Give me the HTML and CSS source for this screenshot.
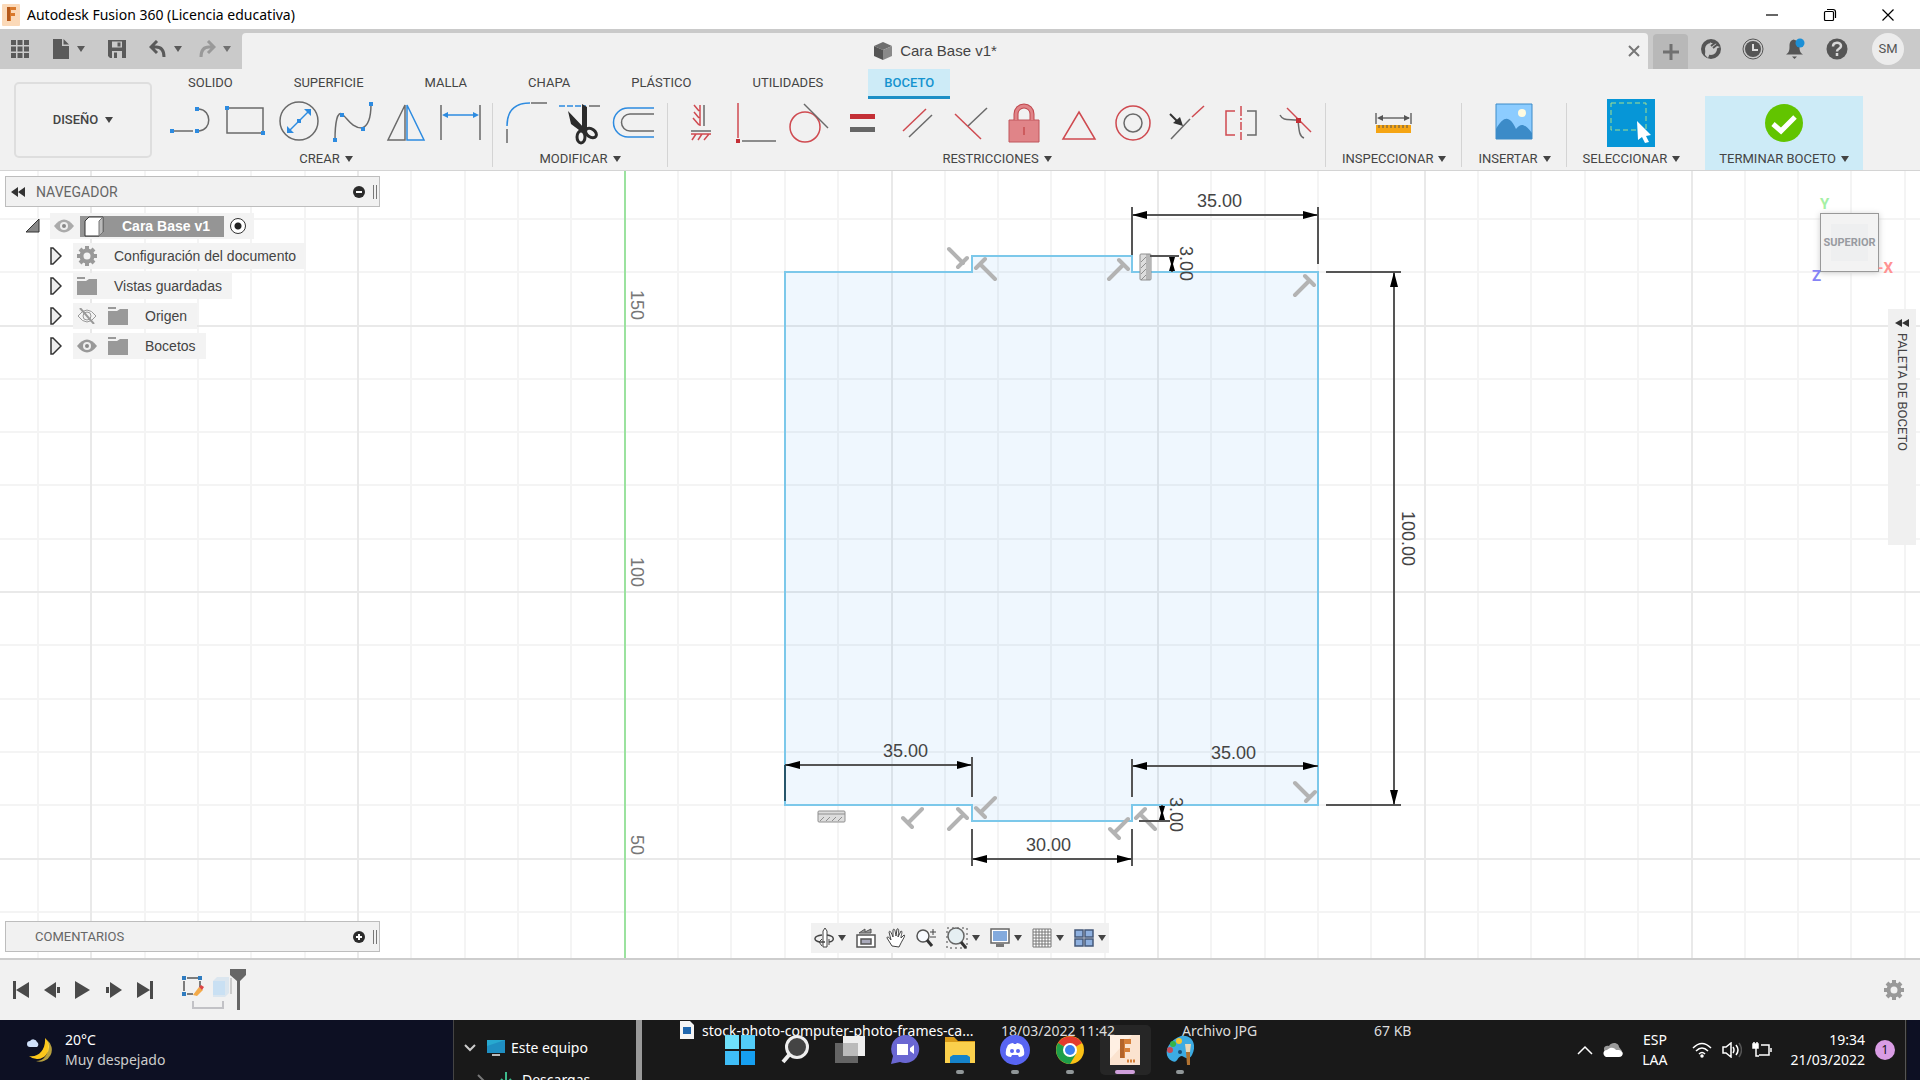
FILE: index.html
```html
<!DOCTYPE html>
<html lang="es">
<head>
<meta charset="utf-8">
<meta name="viewport" content="width=device-width, initial-scale=1">
<title>Autodesk Fusion 360 (Licencia educativa)</title>
<link rel="stylesheet" href="styles.css">
</head>
<body>
<header class="titlebar">
  <svg class="logo" width="18" height="22" viewBox="0 0 18 22"><rect width="18" height="22" rx="1" fill="#fbd9b8"/><path d="M5 3h9v3H9v3h4v3H9v5H5z" fill="#d9792b"/><path d="M5 3h3v14H5z" fill="#b5581a"/></svg>
  <h1 class="app-name">Autodesk Fusion 360 (Licencia educativa)</h1>
  <div class="window-controls">
    <button aria-label="Minimizar"><svg width="14" height="14" viewBox="0 0 14 14"><path d="M1 7h12" stroke="#000" stroke-width="1.2"/></svg></button>
    <button aria-label="Restaurar"><svg width="14" height="14" viewBox="0 0 14 14" fill="none" stroke="#000" stroke-width="1.2"><rect x="1.500" y="3.500" width="9" height="9" rx="1"/><path d="M4 1.500h6a2.500 2.500 0 0 1 2.500 2.500v6"/></svg></button>
    <button aria-label="Cerrar"><svg width="14" height="14" viewBox="0 0 14 14"><path d="M1.500 1.500l11 11M12.500 1.500l-11 11" stroke="#000" stroke-width="1.200"/></svg></button>
  </div>
</header>

<div class="quickbar">
  <div class="quick-tools">
    <button aria-label="Panel de datos"><svg width="18" height="18" viewBox="0 0 18 18" fill="#5a5a5a"><path d="M0 0h5v5H0zM6.500 0h5v5h-5zM13 0h5v5h-5zM0 6.500h5v5H0zM6.500 6.500h5v5h-5zM13 6.500h5v5h-5zM0 13h5v5H0zM6.500 13h5v5h-5zM13 13h5v5h-5z"/></svg></button>
    <button aria-label="Archivo"><svg width="18" height="20" viewBox="0 0 18 20" fill="#5a5a5a"><path d="M1 0h9v7h7v13H1z"/><path d="M11.500 0L17 5.500h-5.500z"/></svg><i class="caret"></i></button>
    <button aria-label="Guardar"><svg width="18" height="18" viewBox="0 0 18 18"><path d="M0 0h18v18H2l-2-2z" fill="#5a5a5a"/><path d="M4 1.500h10v6H4zM4 11h10v7H4z" fill="#cacaca"/><path d="M9.500 2.500h3v4h-3zM6 12.500h3V18H6z" fill="#5a5a5a"/></svg></button>
    <button aria-label="Deshacer"><svg width="18" height="18" viewBox="0 0 18 18"><path d="M8 1L2 7l6 6M2 7h5c5 0 8 3 8 10" fill="none" stroke="#5a5a5a" stroke-width="3"/></svg><i class="caret"></i></button>
    <button class="dim" aria-label="Rehacer"><svg width="18" height="18" viewBox="0 0 18 18"><path d="M10 1l6 6-6 6M16 7h-5c-5 0-8 3-8 10" fill="none" stroke="#8d8d8d" stroke-width="3"/></svg><i class="caret"></i></button>
  </div>
  <div class="doc-tab">
    <span class="doc-name"><svg width="20" height="20" viewBox="0 0 20 20"><path d="M1 5l9-4 9 4-9 4z" fill="#6e6e6e"/><path d="M1 5l9 4v10l-9-4z" fill="#555"/><path d="M19 5l-9 4v10l9-4z" fill="#8a8a8a"/></svg>Cara Base v1*</span>
    <button class="tab-close" aria-label="Cerrar pestaña"><svg width="12" height="12" viewBox="0 0 12 12"><path d="M1 1l10 10M11 1L1 11" stroke="#777" stroke-width="2"/></svg></button>
  </div>
  <button class="tab-add" aria-label="Nuevo diseño"><svg width="18" height="18" viewBox="0 0 18 18"><path d="M9 1v16M1 9h16" stroke="#707070" stroke-width="3"/></svg></button>
  <div class="account">
    <button aria-label="Extensiones"><svg width="20" height="20" viewBox="0 0 20 20"><circle cx="10" cy="10" r="8" fill="none" stroke="#555" stroke-width="4"/><path d="M4 16c0-6 2-9 6-10l-1-3 4 3 2-2 1 3 3 1-4 2c-1 3-4 4-6 4l-2 5z" fill="#cacaca"/><path d="M10 7l5-4M12 9l5-4" stroke="#555" stroke-width="2"/></svg></button>
    <button aria-label="Estado del trabajo"><svg width="22" height="22" viewBox="0 0 22 22"><circle cx="11" cy="11" r="10" fill="none" stroke="#555"/><circle cx="11" cy="11" r="8" fill="#555"/><path d="M11 6v6h5" stroke="#ddd" stroke-width="2" fill="none"/></svg></button>
    <button aria-label="Notificaciones"><svg width="20" height="22" viewBox="0 0 20 22"><path d="M8.500 1.500c-3 1-4 3-4 7 0 4-.500 6-3.500 8h17c-3-2-3.500-4-3.500-8s-2-6-6-7z" fill="#555"/><path d="M7 18.500h5l-2.500 2.500z" fill="#555"/><circle cx="15" cy="5" r="4.500" fill="#1b8fd6"/></svg></button>
    <button aria-label="Ayuda"><svg width="22" height="22" viewBox="0 0 22 22"><circle cx="11" cy="11" r="10.500" fill="#555"/><path d="M7 8.500c0-5 8-5 8-.500 0 3-4 2.500-4 5.500M11 15v3" stroke="#d8d8d8" stroke-width="2.500" fill="none"/></svg></button>
    <button class="avatar">SM</button>
  </div>
</div>

<section class="ribbon">
  <button class="workspace">DISEÑO <i class="caret"></i></button>
  <div class="ribbon-main">
    <nav class="tabs">
      <button>SOLIDO</button><button>SUPERFICIE</button><button>MALLA</button><button>CHAPA</button><button>PLÁSTICO</button><button>UTILIDADES</button><button class="active">BOCETO</button>
    </nav>
    <div class="groups">
      <div class="group">
        <div class="tools">
          <button aria-label="Línea"><svg viewBox="0 0 48 48"><path d="M6 32h20M32 32c13-1 13-21 0-22" class="g"/><path d="M3 30h4v4H3zM28 30h4v4h-4zM28 8h4v4h-4z" class="bf"/></svg></button>
          <button aria-label="Rectángulo"><svg viewBox="0 0 48 48"><path d="M6 9h36v25H6z" class="g"/><path d="M4 7h4v4H4zM40 32h4v4h-4z" class="bf"/></svg></button>
          <button aria-label="Círculo"><svg viewBox="0 0 48 48"><circle cx="24" cy="22" r="19" class="g"/><path d="M14 32l20-20" class="b"/><path d="M22 20h4v4h-4zM36 10v7l-7-7zM12 34v-7l7 7z" class="bf"/></svg></button>
          <button aria-label="Spline"><svg viewBox="0 0 48 48"><path d="M6 41C6 25 8 10 14 16c5 4 9 13 19 13 6-2 9-10 9-24" class="g"/><path d="M4 39h4v4H4zM11 14h4v4h-4zM32 28h4v4h-4zM40 3h4v4h-4z" class="bf"/></svg></button>
          <button aria-label="Simetría"><svg viewBox="0 0 48 48"><path d="M22 6v35H5z" class="g"/><path d="M24 6v35h17z" class="b"/></svg></button>
          <button aria-label="Cota"><svg viewBox="0 0 48 48"><path d="M4 6v35M43 6v35" class="g"/><path d="M7 16h33" class="b"/><path d="M5 16l6-3v6zM42 16l-6-3v6z" class="bf"/></svg></button>
        </div>
        <button class="group-name">CREAR<i class="caret"></i></button>
      </div>
      <div class="group modify">
        <div class="tools">
          <button aria-label="Empalme"><svg viewBox="0 0 48 48"><path d="M5 27C5 11 14 4 28 4" class="b"/><path d="M5 30v14M29 4h16" class="g"/></svg></button>
          <button aria-label="Recortar"><svg viewBox="0 0 48 48"><path d="M3 7h27" class="b" stroke-dasharray="6 2" stroke-width="2"/><path d="M33 7h11" class="g"/><path d="M26 5l5 3v22l-3 4-2-3zM12 12l18 19-3 3-12-9z" fill="#2b2b2b"/><g fill="none" stroke="#2b2b2b" stroke-width="3"><ellipse cx="25" cy="38" rx="4" ry="6"/><ellipse cx="35" cy="34" rx="6" ry="4" transform="rotate(35 35 34)"/></g></svg></button>
          <button aria-label="Desfase"><svg viewBox="0 0 48 48"><path d="M44 9H18a14 14 0 0 0 0 29h26" class="b" stroke-width="2"/><path d="M44 15H20a8 8 0 0 0 0 17h24" class="g" stroke-width="2"/></svg></button>
        </div>
        <button class="group-name">MODIFICAR<i class="caret"></i></button>
      </div>
      <div class="group">
        <div class="tools">
          <button aria-label="Horizontal/Vertical"><svg viewBox="0 0 48 48"><path d="M24 6v21M23 12l-5-6M23 19l-5-6M23 26l-6-7M15 35h20M20 35l-4 6M26 35l-4 6M33 35l-5 6" class="r" stroke-width="2"/><path d="M28 6v21M15 32h20" class="g"/></svg></button>
          <button aria-label="Coincidente"><svg viewBox="0 0 48 48"><path d="M8 4v35" class="r"/><path d="M12 42h34" class="g"/><path d="M6 40h4v4H6z" fill="#c42f36"/></svg></button>
          <button aria-label="Tangente"><svg viewBox="0 0 48 48"><circle cx="21" cy="28" r="15" class="r"/><path d="M20 5l24 24" class="g"/></svg></button>
          <button aria-label="Igual"><svg viewBox="0 0 48 48"><path d="M12 15h25v5H12z" fill="#c42f36"/><path d="M12 28h25v5H12z" fill="#666"/></svg></button>
          <button aria-label="Paralela"><svg viewBox="0 0 48 48"><path d="M11 32l23-22" class="r"/><path d="M17 38l23-22" class="g"/></svg></button>
          <button aria-label="Perpendicular"><svg viewBox="0 0 48 48"><path d="M9 15l26 25" class="r"/><path d="M22 27l19-18" class="g"/></svg></button>
          <button aria-label="Bloquear"><svg viewBox="0 0 48 48"><path d="M9 21h30v22H9z" fill="#e08488" stroke="#c0575c"/><path d="M16 21v-6a8 8 0 0 1 16 0v6" fill="none" stroke="#c0484e" stroke-width="5"/><path d="M16 21v-6a8 8 0 0 1 16 0v6" fill="none" stroke="#e08488" stroke-width="3"/><path d="M24 28v8" stroke="#b33"/></svg></button>
          <button aria-label="Punto medio"><svg viewBox="0 0 48 48"><path d="M25 13l16 27H9z" class="r" stroke-width="2"/></svg></button>
          <button aria-label="Concéntrica"><svg viewBox="0 0 48 48"><circle cx="25" cy="24" r="17" class="r" stroke-width="2"/><circle cx="25" cy="24" r="9" class="g" stroke-width="2"/></svg></button>
          <button aria-label="Colineal"><svg viewBox="0 0 48 48"><path d="M9 40l19-20" class="g"/><path d="M30 18l12-11" class="r"/><path d="M8 15l7 7" stroke="#333" stroke-width="2"/><path d="M21 27l-10-3 7-6z" fill="#333"/></svg></button>
          <button aria-label="Simétrica"><svg viewBox="0 0 48 48"><path d="M19 12h-9v24h9M25 7v10M25 19v2M25 23v8M25 33v8" class="r"/><path d="M31 12h9v24h-9" class="g"/></svg></button>
          <button aria-label="Curvatura"><svg viewBox="0 0 48 48"><path d="M17 9l24 24" class="r"/><path d="M10 16c3 6 8 4 18 5 1 10 1 16 6 18" class="g"/><path d="M26 19h5v5h-5z" fill="#c42f36"/></svg></button>
        </div>
        <button class="group-name">RESTRICCIONES<i class="caret"></i></button>
      </div>
      <div class="group wide">
        <div class="tools"><button aria-label="Medir"><svg viewBox="0 0 48 48"><path d="M6 14v11M41 14v11M9 19h30" class="g" stroke-width="2"/><path d="M7 19l6-3v6zM40 19l-6-3v6z" fill="#555"/><path d="M6 26h35v8H6z" fill="#f5a514"/><path d="M9 26v3M13 26v3M17 26v3M21 26v3M25 26v3M29 26v3M33 26v3M37 26v3" stroke="#555"/></svg></button></div>
        <button class="group-name">INSPECCIONAR<i class="caret"></i></button>
      </div>
      <div class="group wide">
        <div class="tools"><button aria-label="Insertar imagen"><svg viewBox="0 0 48 48"><path d="M6 5h36v35H6z" fill="#8cccff"/><path d="M6 30c8-14 14-13 20 0 5-6 8-6 16 4v6H6z" fill="#3c8bc8"/><circle cx="32" cy="14" r="4" fill="#fffbe0"/><path d="M6 5h36v35H6z" fill="none" stroke="#3c8bc8"/></svg></button></div>
        <button class="group-name">INSERTAR<i class="caret"></i></button>
      </div>
      <div class="group wide last">
        <div class="tools"><button aria-label="Seleccionar"><svg viewBox="0 0 48 48"><path d="M0 0h48v48H0z" fill="#0696d7"/><path d="M4 4h35v27H4z" fill="none" stroke="#a6e08c" stroke-dasharray="5 3"/><path d="M30 22l14 14-5 1 3 6-4 1-3-6-4 3z" fill="#fff"/></svg></button></div>
        <button class="group-name">SELECCIONAR<i class="caret"></i></button>
      </div>
      <div class="group finish">
        <div class="tools"><button aria-label="Terminar"><svg viewBox="0 0 48 48"><circle cx="24" cy="24" r="19" fill="#62c400"/><path d="M13 25l8 7 14-14" fill="none" stroke="#fff" stroke-width="5"/></svg></button></div>
        <button class="group-name">TERMINAR BOCETO<i class="caret"></i></button>
      </div>
    </div>
  </div>
</section>

<main class="canvas">
  <svg class="sketch" aria-label="Boceto">
    <g transform="translate(0 -171)">
      <path class="grid" d="M38 171v787M145 171v787M198 171v787M251 171v787M305 171v787M411 171v787M465 171v787M518 171v787M571 171v787M678 171v787M731 171v787M785 171v787M838 171v787M945 171v787M998 171v787M1051 171v787M1105 171v787M1211 171v787M1265 171v787M1318 171v787M1371 171v787M1478 171v787M1531 171v787M1585 171v787M1638 171v787M1745 171v787M1798 171v787M1851 171v787M1905 171v787M0 219h4000M0 272h4000M0 379h4000M0 432h4000M0 485h4000M0 539h4000M0 645h4000M0 699h4000M0 752h4000M0 805h4000M0 912h4000"/>
      <path class="grid major" d="M91 171v787M358 171v787M892 171v787M1158 171v787M1425 171v787M1692 171v787M0 326h4000M0 592h4000M0 859h4000"/>
      <path d="M625 171v787" stroke="#9be29f" stroke-width="2"/>
      <g class="axis"><text transform="translate(631 290) rotate(90)">150</text><text transform="translate(631 557) rotate(90)">100</text><text transform="translate(631 835) rotate(90)">50</text></g>
      <path class="profile" d="M785 272h187v-16h160v16h186v533h-186v16H972v-16H785z"/>
      <g class="rel">
        <path d="M949 249l14 14M967 258l-9 9M995 279l-15-15M985 259l-9 9M1109 279l14-14M1119 260l9 9M1295 295l14-14M1305 276l9 9M922 809l-14 14M903 818l9 9M949 829l14-14M958 809l9 9M995 798l-14 14M976 808l9 9M1128 819l-14 14M1110 829l9 9M1155 829l-14-14M1145 809l-9 9M1295 783l14 14M1315 792l-9 9"/>
      </g>
      <g fill="#ddd" stroke="#8f8f8f"><rect x="1140" y="254" width="11" height="26" rx="1"/><path d="M1147 254v26M1149 254v26M1141 262l5-5M1141 268l5-5M1141 274l5-5M1141 280l5-5"/><rect x="818" y="811" width="27" height="11" rx="1"/><path d="M818 814h27M820 821l4-4M826 821l4-4M832 821l4-4M838 821l4-4"/></g>
      <g class="dim-line">
        <path d="M1132 215h186M1132 207v48M1318 207v57M1326 272h75M1326 805h75M1394 272v533M785 765h187M972 757v40M1132 766h186M1132 759v38M972 859h160M972 829v37M1132 829v37M1150 256h29M1172 256v16M1139 821h31M1162 805v16"/>
        <path d="M785 765v36" stroke="#27566b"/>
        <path class="arrows" d="M1132 215l15-4v8zM1318 215l-15-4v8zM1394 272l-4 15h8zM1394 805l-4-15h8zM785 765l15-4v8zM972 765l-15-4v8zM1132 766l15-4v8zM1318 766l-15-4v8zM972 859l15-4v8zM1132 859l-15-4v8zM1169 257h6l-2 7 2 7h-6l2-7zM1159 806h6l-2 7 2 7h-6l2-7z"/>
      </g>
      <g class="dim-text">
        <text x="1197" y="207">35.00</text><text x="883" y="757">35.00</text><text x="1211" y="759">35.00</text><text x="1026" y="851">30.00</text>
        <text transform="translate(1402 511) rotate(90)">100.00</text><text transform="translate(1180 246) rotate(90)">3.00</text><text transform="translate(1170 797) rotate(90)">3.00</text>
      </g>
    </g>
  </svg>

  <aside class="browser">
    <div class="panel-head">
      <svg class="rewind" width="14" height="10" viewBox="0 0 14 10"><path d="M7 0v10L0 5zM14 0v10L7 5z" fill="#333"/></svg>
      <span class="nav-title">NAVEGADOR</span>
      <button aria-label="Contraer"><svg width="12" height="12" viewBox="0 0 12 12"><circle cx="6" cy="6" r="6" fill="#2b2b2b"/><path d="M3 6h6" stroke="#fff" stroke-width="2"/></svg></button><i class="grip"></i>
    </div>
    <ul class="tree">
      <li class="root"><svg width="16" height="16" viewBox="0 0 16 16"><path d="M14 1v13H1z" fill="#888" stroke="#333"/></svg>
        <span class="item"><svg width="20" height="14" viewBox="0 0 20 14"><path d="M0 7Q10-6 20 7 10 20 0 7z" fill="#aaa"/><circle cx="10" cy="7" r="4" fill="#eee"/><circle cx="10" cy="7" r="2" fill="#888"/></svg>
        <span class="selected"><svg width="24" height="21" viewBox="0 0 24 21"><path d="M3 5l4-4h14v15l-4 4H3z" fill="#fff" stroke="#333"/><path d="M17 5l4-4v15l-4 4z" fill="#bbb" stroke="#777"/></svg>Cara Base v1</span>
        <input type="radio" checked aria-label="Activar Cara Base v1"></span></li>
      <li><svg class="arrow" width="12" height="18" viewBox="0 0 12 18"><path d="M1 1l2 0 8 8-8 8H1z"/></svg><span class="item"><svg width="20" height="20" viewBox="-10 -10 20 20"><circle r="5.500" fill="none" stroke="#999" stroke-width="4"/><path d="M0-10V-6M0 10V6M-10 0h4M10 0H6M-7-7l3 3M7-7L4-4M-7 7l3-3M7 7L4 4" stroke="#999" stroke-width="4"/></svg><b>Configuración del documento</b></span></li>
      <li><svg class="arrow" width="12" height="18" viewBox="0 0 12 18"><path d="M1 1l2 0 8 8-8 8H1z"/></svg><span class="item"><svg width="20" height="18" viewBox="0 0 20 18"><path d="M0 4h9l3-2h8v16H0zM0 0h8v2H0z" fill="#999"/></svg><b>Vistas guardadas</b></span></li>
      <li><svg class="arrow" width="12" height="18" viewBox="0 0 12 18"><path d="M1 1l2 0 8 8-8 8H1z"/></svg><span class="item"><svg width="20" height="16" viewBox="0 0 20 16"><g fill="none" stroke="#999"><path d="M1 8Q10-4 19 8 10 20 1 8z"/><circle cx="10" cy="8" r="4"/><path d="M3 0l14 16" stroke-width="2"/></g></svg><svg width="20" height="18" viewBox="0 0 20 18"><path d="M0 4h9l3-2h8v16H0zM0 0h8v2H0z" fill="#999"/></svg><b>Origen</b></span></li>
      <li><svg class="arrow" width="12" height="18" viewBox="0 0 12 18"><path d="M1 1l2 0 8 8-8 8H1z"/></svg><span class="item"><svg width="20" height="14" viewBox="0 0 20 14"><path d="M0 7Q10-6 20 7 10 20 0 7z" fill="#999"/><circle cx="10" cy="7" r="4" fill="#eee"/><circle cx="10" cy="7" r="2" fill="#888"/></svg><svg width="20" height="18" viewBox="0 0 20 18"><path d="M0 4h9l3-2h8v16H0zM0 0h8v2H0z" fill="#999"/></svg><b>Bocetos</b></span></li>
    </ul>
  </aside>

  <div class="viewcube"><button>SUPERIOR</button><span class="ax-y">Y</span><span class="ax-x">-X</span><span class="ax-z">Z</span></div>

  <button class="palette"><svg width="14" height="8" viewBox="0 0 14 8"><path d="M7 0v8L0 4zM14 0v8L7 4z" fill="#333"/></svg><span>PALETA DE BOCETO</span></button>

  <div class="panel-head comments">
    <span class="com-title">COMENTARIOS</span>
    <button aria-label="Añadir comentario"><svg width="12" height="12" viewBox="0 0 12 12"><circle cx="6" cy="6" r="6" fill="#2b2b2b"/><path d="M3 6h6M6 3v6" stroke="#fff" stroke-width="2"/></svg></button><i class="grip"></i>
  </div>

  <div class="navbar">
    <button aria-label="Órbita"><svg width="20" height="20" viewBox="0 0 20 20" fill="none" stroke="#444"><path d="M9 3l2-3 2 3v16H9z" fill="#fff"/><path d="M8 7C-1 8-1 13 6 14h5M13 7c8 1 8 6 2 7" stroke-width="1.500"/><path d="M8 11l-3 3 3 4M15 11v6"/></svg><i class="caret"></i></button>
    <button aria-label="Mirar a"><svg width="20" height="20" viewBox="0 0 20 20" fill="#fff" stroke="#555"><path d="M1 7h18v12H1z" stroke-width="1.500"/><path d="M5 11h10v5H5z" fill="#aab" stroke-width="1.500"/><path d="M3 5l6-4v3l6-3v4z" fill="#999"/></svg></button>
    <button aria-label="Encuadre"><svg width="20" height="20" viewBox="0 0 20 20"><path d="M6 18L1 10c0-2 2-1 4 2L3 4c1-2 2 0 4 5V2c1-2 2-1 3 6l1-7c2-1 2 1 1 8l3-6c2 0 0 4 0 7l3-3c2 0-1 4-3 8l-2 4z" fill="#fff" stroke="#444"/></svg></button>
    <button aria-label="Zoom"><svg width="20" height="20" viewBox="0 0 20 20"><circle cx="7" cy="8" r="6" fill="#f8fbff" stroke="#555" stroke-width="1.500"/><path d="M11 12l5 6" stroke="#333" stroke-width="3"/><path d="M14 4h6M17 1v6M14 9h6" stroke="#444"/></svg></button>
    <button aria-label="Ventana de zoom"><svg width="22" height="22" viewBox="0 0 22 22"><path d="M1 1h20v20H1z" fill="none" stroke="#444" stroke-dasharray="2 3"/><circle cx="10" cy="9" r="8" fill="#e5eff2" stroke="#666" stroke-width="1.500"/><path d="M15 15l5 6" stroke="#333" stroke-width="3"/></svg><i class="caret"></i></button>
    <button aria-label="Visualización"><svg width="20" height="20" viewBox="0 0 20 20"><path d="M1 1h18v14H1z" fill="#fff" stroke="#666" stroke-width="1.500"/><path d="M3 3h14v10H3z" fill="#83aadd"/><path d="M6 16h8v3H6z" fill="#777"/></svg><i class="caret"></i></button>
    <button aria-label="Rejilla"><svg width="20" height="20" viewBox="0 0 20 20"><path d="M1 1h18v18H1zM4 1v18M7 1v18M10 1v18M13 1v18M16 1v18M1 4h18M1 7h18M1 10h18M1 13h18M1 16h18" fill="#fff" stroke="#777"/></svg><i class="caret"></i></button>
    <button aria-label="Ventanas gráficas"><svg width="20" height="18" viewBox="0 0 20 18"><path d="M1 1h8v7H1zM11 1h8v7h-8zM1 10h8v7H1zM11 10h8v7h-8z" fill="#8eb0df" stroke="#445879" stroke-width="1.500"/></svg><i class="caret"></i></button>
  </div>
</main>

<section class="timeline">
  <div class="playback">
    <button aria-label="Inicio"><svg width="16" height="18" viewBox="0 0 16 18" fill="#4a4a4a"><path d="M0 0h3v18H0zM16 1v16L3 9z"/></svg></button>
    <button aria-label="Anterior"><svg width="16" height="18" viewBox="0 0 16 18" fill="#4a4a4a"><path d="M12 1v16L0 9zM13 6h3v6h-3z"/></svg></button>
    <button aria-label="Reproducir"><svg width="16" height="18" viewBox="0 0 16 18" fill="#4a4a4a"><path d="M0 0v18l15-9z"/></svg></button>
    <button aria-label="Siguiente"><svg width="16" height="18" viewBox="0 0 16 18" fill="#4a4a4a"><path d="M4 1v16l12-8zM0 6h3v6H0z"/></svg></button>
    <button aria-label="Fin"><svg width="16" height="18" viewBox="0 0 16 18" fill="#4a4a4a"><path d="M0 1v16l13-8zM13 0h3v18h-3z"/></svg></button>
  </div>
  <svg class="features" width="66" height="42" viewBox="0 0 66 42"><path d="M6 9h11M3 12v10M19 12v6M6 25h6" stroke="#555" stroke-width="1.500"/><path d="M1 7h4v4H1zM17 7h4v4h-4zM1 23h4v4H1z" fill="#2f7cc0"/><path d="M12 26l6-8 4 3-6 6z" fill="#f3aa49"/><path d="M18 18l2-2 3 2-2 3z" fill="#d44"/><path d="M32 12l4-4h12v16l-4 4H32z" fill="#dbe6ef"/><path d="M32 12h12v14H32z" fill="#c9e0f3"/><path d="M50 9v16" stroke="#ccc" stroke-width="2"/><path d="M12 32v7h30v-7" fill="none" stroke="#c2c2c6" stroke-width="2"/><path d="M49 0h16v6l-6 6v29h-3V12l-7-6z" fill="#666"/></svg>
  <button class="settings" aria-label="Configuración"><svg width="20" height="20" viewBox="-10 -10 20 20"><circle r="5.500" fill="none" stroke="#999" stroke-width="4"/><path d="M0-10V-6M0 10V6M-10 0h4M10 0H6M-7-7l3 3M7-7L4-4M-7 7l3-3M7 7L4 4" stroke="#999" stroke-width="4"/></svg></button>
</section>

<footer class="taskbar">
  <div class="explorer">
    <div class="side">
      <div class="side-row"><svg width="12" height="8" viewBox="0 0 12 8"><path d="M1 1l5 5 5-5" fill="none" stroke="#ccc" stroke-width="2"/></svg><svg width="18" height="16" viewBox="0 0 18 16"><path d="M0 0h18v13H0z" fill="#27a9d0"/><path d="M0 13V6l18-6v13z" fill="#1b7fb9" opacity=".6"/><path d="M5 14h8v2H5z" fill="#bbb"/></svg>Este equipo</div>
      <div class="side-row sub"><svg width="8" height="12" viewBox="0 0 8 12"><path d="M1 1l5 5-5 5" fill="none" stroke="#777" stroke-width="2"/></svg><svg width="14" height="16" viewBox="0 0 14 16"><path d="M7 0v12M2 7l5 5 5-5" fill="none" stroke="#3dba8c" stroke-width="2"/></svg>Descargas</div>
    </div>
    <div class="file-row"><svg width="14" height="18" viewBox="0 0 14 18"><path d="M0 0h10l4 4v14H0z" fill="#f4f4f4"/><path d="M3 6h8v7H3z" fill="#1f66ad"/></svg><span class="f-name">stock-photo-computer-photo-frames-ca...</span><span class="f-date">18/03/2022 11:42</span><span class="f-type">Archivo JPG</span><span class="f-size">67 KB</span></div>
  </div>
  <button class="weather"><svg width="28" height="28" viewBox="0 0 28 28"><path d="M18 2a12 12 0 1 1-16 18c9 2 17-6 16-18z" fill="#fbc71b"/><path d="M20 4a12 12 0 0 1-11 21c10 0 14-10 11-21z" fill="#ffde4a" opacity=".7"/><path d="M3 11a3 3 0 0 1 0-6 4 4 0 0 1 7 1 3 3 0 0 1 0 5z" fill="#cfe0fa"/></svg><span>20°C<small>Muy despejado</small></span></button>
  <nav class="apps">
    <button aria-label="Inicio"><svg width="30" height="30" viewBox="0 0 30 30"><path d="M0 0h14v14H0z" fill="#6fe0fb"/><path d="M16 0h14v14H16z" fill="#52ccf8"/><path d="M0 16h14v14H0z" fill="#3fbdf6"/><path d="M16 16h14v14H16z" fill="#169ff0"/></svg></button>
    <button aria-label="Buscar"><svg width="30" height="30" viewBox="0 0 30 30"><circle cx="17" cy="12" r="10.500" fill="#444" stroke="#eee" stroke-width="3"/><path d="M9 20l-6 7" stroke="#eee" stroke-width="4"/></svg></button>
    <button aria-label="Vista de tareas"><svg width="30" height="30" viewBox="0 0 30 30"><path d="M8 1h22v20H8z" fill="#eee"/><path d="M0 8h23v20H0z" fill="#777" opacity=".8"/><path d="M8 8h15v13H8z" fill="#bbb"/></svg></button>
    <button aria-label="Chat"><svg width="30" height="30" viewBox="0 0 30 30"><path d="M15 0a14 14 0 1 1-5 27l-9 2 2-8A14 14 0 0 1 15 0z" fill="#6a67d2"/><path d="M7 9h11v11H7zM20 13l4-3v9l-4-3z" fill="#fff"/></svg></button>
    <button class="running" aria-label="Explorador"><svg width="30" height="30" viewBox="0 0 30 30"><path d="M0 2h9l4 4h17v8H0z" fill="#d99b18"/><path d="M0 7h30v21H0z" fill="#fbd04c"/><path d="M5 28v-6l3-2h14l3 2v6z" fill="#1583cb"/></svg></button>
    <button class="running" aria-label="Discord"><svg width="30" height="30" viewBox="0 0 30 30"><circle cx="15" cy="15" r="15" fill="#5865f2"/><path d="M8 10q3-2 5-2l1 1h2l1-1q2 0 5 2 3 5 2 10-2 2-5 2l-1-2h-6l-1 2q-3 0-5-2-1-5 2-10z" fill="#fff"/><circle cx="12" cy="16" r="2" fill="#5865f2"/><circle cx="18" cy="16" r="2" fill="#5865f2"/></svg></button>
    <button class="running" aria-label="Chrome"><svg width="28" height="28" viewBox="0 0 28 28"><circle cx="14" cy="14" r="14" fill="#fbc116"/><path d="M14 14L2 7A14 14 0 0 1 26 7z" fill="#e33b2e"/><path d="M14 14L2 7a14 14 0 0 0 12 21l6-10z" fill="#1e9e4a"/><circle cx="14" cy="14" r="7" fill="#fff"/><circle cx="14" cy="14" r="5" fill="#3b80ef"/></svg></button>
    <button class="running current" aria-label="Fusion 360"><svg width="30" height="30" viewBox="0 0 30 30"><path d="M0 0h30v30H0z" fill="#fbe3cf"/><path d="M0 0h22L0 24z" fill="#fff0e3"/><path d="M10 4h11v5h-6v4h5v4h-5v6h-5z" fill="#d68039"/><path d="M10 4h4v19h-4z" fill="#b3642a"/><path d="M17 26h9" stroke="#d68039" stroke-width="3" stroke-dasharray="2 1"/></svg></button>
    <button class="running" aria-label="Paint"><svg width="28" height="30" viewBox="0 0 28 30"><path d="M15 1C27-1 31 11 26 20c-3 6-8 2-10 1-5 0-4 8-10 5C-3 22-1 7 15 1z" fill="#3cabe2"/><circle cx="7" cy="9" r="3" fill="#35b54b"/><circle cx="13" cy="6" r="3" fill="#f4c42e"/><circle cx="4" cy="15" r="3" fill="#c84b55"/><circle cx="14" cy="17" r="2" fill="#174e76"/><path d="M19 9h6l-1 8h-4z" fill="#e9d7b6"/><path d="M20 17h4v13h-3z" fill="#b07231"/></svg></button>
  </nav>
  <div class="tray">
    <svg width="16" height="10" viewBox="0 0 16 10"><path d="M1 9l7-7 7 7" fill="none" stroke="#fff" stroke-width="1.500"/></svg>
    <svg width="20" height="14" viewBox="0 0 20 14"><path d="M2 9c-3-5 1-7 4-6 3-5 10-3 10 1l3 4z" fill="#999"/><path d="M3 14c-4-2-3-7 1-7 4-4 8-2 9 0 9-1 8 7 3 7z" fill="#fff"/></svg>
    <span class="lang">ESP<br>LAA</span>
    <svg width="20" height="16" viewBox="0 0 20 16" fill="none" stroke="#fff" stroke-width="1.500"><path d="M1 6q9-9 18 0M4 9q6-6 12 0M7 12q3-3 6 0"/><circle cx="10" cy="14" r="1" fill="#fff"/></svg>
    <svg width="20" height="16" viewBox="0 0 20 16" fill="none" stroke="#fff" stroke-width="1.500"><path d="M1 5h3l5-4v14l-5-4H1zM11 5q2 3 0 6M14 3q4 5 0 10"/><path d="M17 1q5 7 0 14" stroke="#555"/></svg>
    <svg width="20" height="16" viewBox="0 0 20 16" fill="none" stroke="#fff" stroke-width="1.500"><path d="M9 3h8v10H7M4 6v8h3M19 6v4"/><path d="M1 2h5v4H1zM2 0v2M5 0v2" fill="#fff"/></svg>
    <span class="clock">19:34<br>21/03/2022</span>
    <span class="badge">1</span>
  </div>
</footer>
</body>
</html>
```
FILE: styles.css
```css
* { box-sizing: border-box; }
html, body { margin: 0; height: 100%; }
body {
  display: flex;
  flex-direction: column;
  min-height: 100vh;
  overflow: hidden;
  background: #f1f1f1;
  color: #444;
  font: 13px/16px Roboto, "Liberation Sans", sans-serif;
}
button {
  display: flex;
  align-items: center;
  justify-content: center;
  margin: 0;
  padding: 0;
  border: 0;
  background: none;
  color: inherit;
  font: inherit;
}
svg { display: block; flex: none; }
.caret {
  width: 0;
  height: 0;
  border: 4px solid transparent;
  border-top: 6px solid #444;
  border-bottom: 0;
}

/* Title bar */
.titlebar {
  display: flex;
  align-items: center;
  flex: none;
  height: 29px;
  padding: 0 3px 0 2px;
  background: #fff;
}
.app-name {
  margin: 0 auto 0 7px;
  color: #000;
  font: 14px/20px "Noto Sans", "Open Sans", sans-serif;
}
.window-controls { display: flex; }
.window-controls button { width: 58px; height: 29px; }

/* Quick access bar and document tab */
.quickbar {
  display: flex;
  align-items: flex-end;
  flex: none;
  height: 40px;
  background: #cacaca;
}
.quick-tools {
  display: flex;
  align-items: center;
  gap: 23px;
  width: 242px;
  height: 40px;
  padding-left: 11px;
}
.quick-tools button { gap: 7px; }
.quick-tools .caret { border-top-color: #5a5a5a; }
.quick-tools .dim { opacity: .8; margin-left: -7px; }
.doc-tab {
  display: flex;
  align-items: center;
  flex: 1;
  height: 36px;
  margin-right: 5px;
  padding-right: 8px;
  border-radius: 4px 4px 0 0;
  background: #f1f1f1;
}
.doc-name {
  display: flex;
  align-items: center;
  justify-content: center;
  gap: 7px;
  flex: 1;
  font: 15px/18px "Liberation Sans", sans-serif;
}
.tab-add {
  width: 35px;
  height: 35px;
  border-radius: 4px 4px 0 0;
  background: #b8b8b8;
}
.account {
  display: flex;
  align-items: center;
  gap: 20px;
  height: 40px;
  padding: 0 16px 0 12px;
}
.account button { width: 22px; }
.account .avatar {
  width: 32px;
  height: 32px;
  margin-left: 4px;
  border-radius: 50%;
  background: #ececec;
  color: #555;
}

/* Ribbon */
.ribbon {
  display: flex;
  flex: none;
  height: 102px;
  padding-left: 14px;
  border-bottom: 1px solid #d4d4d4;
}
.workspace {
  gap: 7px;
  width: 138px;
  height: 76px;
  margin-top: 13px;
  border: 2px solid #dedede;
  border-radius: 5px;
  font-weight: 500;
}
.ribbon-main { margin-left: 7px; flex: 1; }
.tabs { display: flex; gap: 29px; padding-left: 13px; }
.tabs button { height: 30px; padding: 0 16px; border-bottom: 3px solid transparent; }
.tabs .active {
  border-color: #1b8fc6;
  background: #cdebf7;
  color: #1593cf;
  font-weight: 500;
}
.groups { display: flex; height: 71px; }
.group {
  display: flex;
  flex-direction: column;
  flex: none;
  align-items: center;
  padding: 0 5px;
  background: linear-gradient(#d4d4d4, #d4d4d4) right 4px / 1px 64px no-repeat;
}
.group.modify { padding: 0 7px 0 6px; }
.group.wide { padding: 0 16px; }
.group.last { background: none; }
.tools { display: flex; }
.tools button { width: 54px; height: 48px; }
.tools svg { width: 48px; height: 48px; }
.group-name { gap: 5px; height: 24px; white-space: nowrap; }
.group.finish {
  height: 74px;
  margin: -3px 0 0 9px;
  padding: 3px 14px 0;
  background: #cdebf7;
}
.g { fill: none; stroke: #6a6a6a; stroke-width: 1.500; }
.b { fill: none; stroke: #2d8be0; stroke-width: 1.500; }
.r { fill: none; stroke: #cf4a50; stroke-width: 1.500; }
.bf { fill: #2d8be0; }

/* Drawing area */
.canvas {
  position: relative;
  flex: 1;
  min-height: 400px;
  overflow: hidden;
  background: #fff;
}
.sketch { position: absolute; inset: 0; width: 100%; height: 100%; }
.grid { fill: none; stroke: #f4f4f4; stroke-width: 2; }
.major { stroke: #e9e9e9; }
.axis { fill: #777; font: 18px "Liberation Sans", sans-serif; }
.profile { fill: rgba(30, 140, 240, .07); stroke: #7cc8ea; stroke-width: 2; }
.rel { fill: none; stroke: #b3b3b3; stroke-width: 4; stroke-linecap: round; }
.dim-line { fill: none; stroke: #555; stroke-width: 2; }
.arrows { fill: #000; stroke: none; }
.dim-text { fill: #444; font: 18px "Liberation Sans", sans-serif; }

.panel-head {
  display: flex;
  align-items: center;
  width: 375px;
  height: 31px;
  padding: 0 2px 0 5px;
  border: 1px solid #bdbdbd;
  background: #f1f1f1;
  color: #666;
}
.rewind { margin-right: 11px; }
.nav-title { flex: 1; font-size: 14px; }
.com-title { flex: 1; padding-left: 24px; }
.grip { width: 4px; height: 14px; margin-left: 8px; border: solid #777; border-width: 0 1px; }
.browser { position: absolute; top: 5px; left: 5px; }
.comments { position: absolute; bottom: 6px; left: 5px; }
.tree {
  display: flex;
  flex-direction: column;
  gap: 4px;
  margin: 6px 0 0;
  padding: 0;
  list-style: none;
  font: 14px/18px "Liberation Sans", sans-serif;
}
.tree li { display: flex; align-items: center; gap: 11px; height: 26px; padding-left: 45px; }
.tree .root { gap: 9px; padding-left: 20px; }
.tree b { padding-left: 6px; font-weight: 400; }
.item {
  display: flex;
  align-items: center;
  gap: 11px;
  height: 26px;
  padding: 0 10px 0 4px;
  background: #f3f3f3;
}
.root .item { gap: 6px; padding-right: 8px; }
.selected {
  display: flex;
  align-items: center;
  gap: 16px;
  height: 21px;
  padding: 0 14px 0 2px;
  background: #959595;
  color: #fff;
  font-weight: 700;
}
.arrow path { fill: #eee; stroke: #333; stroke-width: 1.500; }
.root input {
  appearance: none;
  width: 16px;
  height: 16px;
  margin: 0;
  border: 1px solid #333;
  border-radius: 50%;
  background: radial-gradient(#222 0 3px, #fff 4px);
}
.viewcube { position: absolute; top: 42px; right: 41px; width: 59px; height: 59px; }
.viewcube button {
  width: 59px;
  height: 59px;
  border: 1px solid #999;
  background: #eeeff0;
  box-shadow: 0 1px 6px #ccc, inset 0 0 0 10px #f3f3f3;
  color: #989ba1;
  font: 700 11px/14px Roboto, sans-serif;
}
.viewcube span { position: absolute; font: 700 15px/15px Roboto, sans-serif; }
.ax-y { top: -16px; left: 0; color: #a5f0a5; }
.ax-x { right: -14px; bottom: -4px; color: #ff9292; }
.ax-z { left: -8px; bottom: -12px; color: #8583f5; }
.palette {
  position: absolute;
  top: 138px;
  right: 4px;
  flex-direction: column;
  justify-content: flex-start;
  gap: 6px;
  width: 28px;
  height: 236px;
  padding-top: 10px;
  background: #f0f0f0;
}
.palette span { writing-mode: vertical-rl; }
.navbar {
  position: absolute;
  bottom: 5px;
  left: 50%;
  display: flex;
  align-items: center;
  gap: 10px;
  height: 30px;
  padding: 0 3px;
  background: #f1f1f1;
  transform: translateX(-50%);
}
.navbar button { gap: 4px; }

/* Timeline */
.timeline {
  display: flex;
  align-items: center;
  flex: none;
  height: 62px;
  padding: 0 16px 0 13px;
  border-top: 2px solid #cdcdcd;
}
.playback { display: flex; gap: 15px; }
.features { margin-left: 28px; }
.settings { margin-left: auto; }

/* Taskbar */
.taskbar {
  position: relative;
  display: grid;
  grid-template-columns: 1fr auto 1fr;
  align-items: center;
  flex: none;
  height: 60px;
  overflow: hidden;
  background: linear-gradient(90deg, #0d1023 453px, #444 453px 454px, #191919 454px);
  color: #fff;
  font: 14px/20px "Noto Sans", "Open Sans", sans-serif;
}
.explorer { position: absolute; inset: 0 14px 0 454px; display: flex; border-right: 1px solid #555; }
.taskbar::after { content: ""; position: absolute; top: 0; right: 0; bottom: 0; width: 13px; background: #0d1023; }
.side { width: 188px; padding: 18px 0 0 10px; border-right: 6px solid #999; }
.side-row { display: flex; align-items: center; gap: 11px; height: 20px; }
.side-row svg + svg { margin-right: -5px; }
.side-row.sub { gap: 14px; margin-top: 12px; padding-left: 13px; }
.file-row { display: flex; gap: 8px; height: 32px; padding: 1px 0 0 38px; color: #ddd; white-space: nowrap; }
.f-name { width: 291px; color: #fff; }
.f-date { width: 173px; }
.f-type { width: 184px; }
.weather { position: relative; gap: 10px; justify-self: start; padding-left: 27px; text-align: left; }
.weather small { display: block; color: #ccc; font-size: 14px; }
.apps { position: relative; display: flex; }
.apps button { position: relative; width: 55px; height: 60px; }
.apps .current::before {
  content: "";
  position: absolute;
  inset: 5px 2px;
  border-radius: 5px;
  background: rgba(255, 255, 255, .06);
}
.apps svg { position: relative; }
.apps .running::after {
  content: "";
  position: absolute;
  bottom: 6px;
  width: 8px;
  height: 4px;
  border-radius: 2px;
  background: #909698;
}
.apps .current::after { width: 20px; background: #cf9fdb; }
.tray { position: relative; display: flex; align-items: center; justify-content: flex-end; gap: 10px; padding-right: 25px; }
.lang { margin: 0 14px 0 9px; text-align: center; }
.clock { margin-left: 9px; text-align: right; }
.badge { width: 20px; height: 20px; border-radius: 50%; background: #d99ce4; color: #111; text-align: center; font-size: 12px; }
```
